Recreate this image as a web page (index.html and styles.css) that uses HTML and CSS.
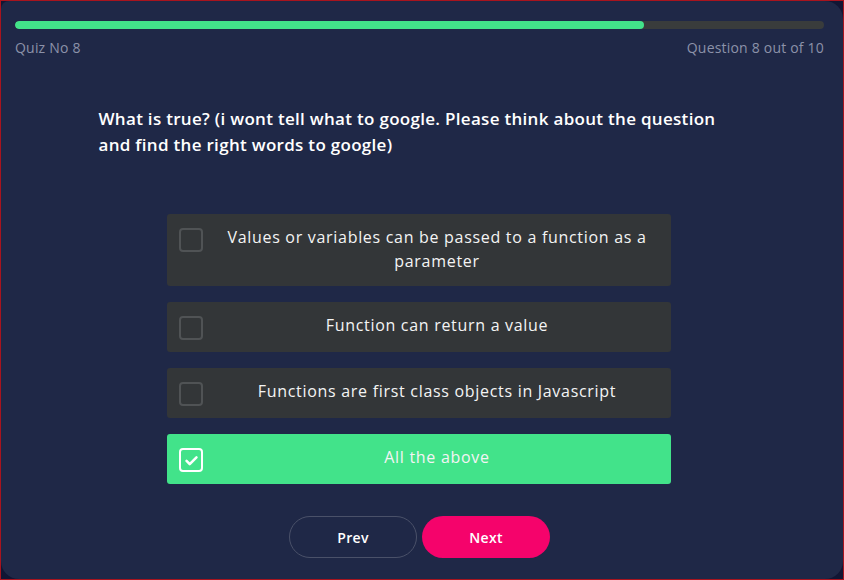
FILE: index.html
```html
<!DOCTYPE html>
<html lang="en">
<head>
<meta charset="utf-8">
<title>Quiz</title>
<link rel="stylesheet" href="styles.css">
</head>
<body>
<div class="frame">
  <main class="card">
    <div class="progress"><div class="progress-fill" style="width: 77.8%"></div></div>
    <div class="meta">
      <span>Quiz No 8</span>
      <span>Question 8 out of 10</span>
    </div>
    <h1 class="question">What is true? (i wont tell what to google. Please think about the question and find the right words to google)</h1>
    <ul class="options">
      <li class="option"><span class="box"></span><span class="label">Values or variables can be passed to a function as a parameter</span></li>
      <li class="option"><span class="box"></span><span class="label">Function can return a value</span></li>
      <li class="option"><span class="box"></span><span class="label">Functions are first class objects in Javascript</span></li>
      <li class="option selected"><span class="box"><svg viewBox="0 0 24 24" width="17" height="17"><path d="M5 12.5l4.5 4.5L19 7.5" fill="none" stroke="#fff" stroke-width="3.6" stroke-linecap="round" stroke-linejoin="round"/></svg></span><span class="label">All the above</span></li>
    </ul>
    <div class="nav">
      <button class="btn prev">Prev</button>
      <button class="btn next">Next</button>
    </div>
  </main>
</div>
</body>
</html>
```

FILE: styles.css
```css
* { box-sizing: border-box; }
html, body { margin: 0; padding: 0; }
body {
  width: 844px;
  height: 580px;
  background: #10142e;
  font-family: "Open Sans", "Noto Sans", sans-serif;
}
.frame {
  width: 844px;
  height: 580px;
  border: 1px solid #a8141e;
  background: #121634;
}
.card {
  height: 100%;
  background: #1f2847;
  border-radius: 8px 18px 18px 18px;
  padding: 20px 19px 0 14px;
  display: flex;
  flex-direction: column;
}
.progress {
  height: 8px;
  border-radius: 4px;
  background: #393c3c;
  overflow: hidden;
}
.progress-fill {
  height: 100%;
  background: #42e38a;
  border-radius: 4px;
}
.meta {
  margin-top: 9px;
  display: flex;
  justify-content: space-between;
  color: #8c92a9;
  font-size: 14px;
  line-height: 20px;
  letter-spacing: 0.2px;
}
.question {
  width: 642px;
  margin: 48px auto 0;
  color: #ffffff;
  font-size: 17px;
  font-weight: 600;
  line-height: 26px;
  letter-spacing: 0.3px;
}
.options {
  list-style: none;
  width: 504px;
  margin: 56px 0 0 152px;
  padding: 0;
  display: flex;
  flex-direction: column;
  gap: 16px;
}
.option {
  display: flex;
  align-items: flex-start;
  background: #333638;
  border-radius: 3px;
  padding: 11px 12px 12px 12px;
  color: #f4f4f4;
  font-size: 16px;
  line-height: 24px;
  letter-spacing: 0.7px;
}
.option.selected {
  background: #42e38a;
}
.box {
  flex: none;
  width: 24px;
  height: 24px;
  margin-top: 3px;
  border: 2px solid #505355;
  border-radius: 4px;
  display: flex;
  align-items: center;
  justify-content: center;
}
.selected .box {
  border-color: #ffffff;
}
.label {
  flex: 1;
  text-align: center;
  padding: 0 0 1px 12px;
}
.nav {
  margin-top: 32px;
  display: flex;
  justify-content: center;
  gap: 5px;
}
.btn {
  width: 128px;
  height: 42px;
  border-radius: 21px;
  font-family: inherit;
  font-size: 14px;
  font-weight: 600;
  letter-spacing: 0.3px;
  color: #ffffff;
  cursor: pointer;
}
.prev {
  background: transparent;
  border: 1px solid #4a5169;
}
.next {
  background: #f5036b;
  border: none;
}
```
